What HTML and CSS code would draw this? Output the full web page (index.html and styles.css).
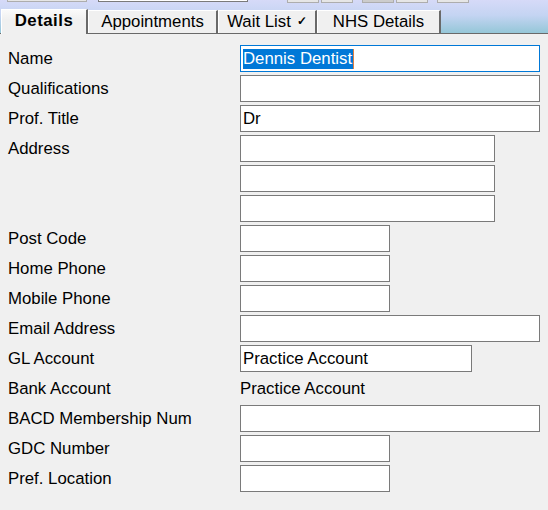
FILE: index.html
```html
<!DOCTYPE html>
<html lang="en">
<head>
    <meta charset="UTF-8">
    <title>Dentist Details</title>
    <link rel="stylesheet" href="styles.css">
</head>
<body>
    <div class="header">
        <div class="toolbar">
            <div class="tool-box"></div>
            <div class="tool-text"></div>
            <div class="tool-btn first"></div>
            <div class="tool-btn"></div>
            <div class="tool-btn group pressed"></div>
            <div class="tool-btn"></div>
            <div class="tool-btn group"></div>
        </div>
        <div class="tabs">
            <div class="tab active tab-details">Details</div>
            <div class="tab tab-appts">Appointments</div>
            <div class="tab tab-wait">Wait List <span class="tick">&#10003;</span></div>
            <div class="tab tab-nhs">NHS Details</div>
        </div>
    </div>

    <div class="panel">
        <div class="row">
            <label>Name</label>
            <div class="textbox wide focused"><span class="sel">Dennis Dentist</span></div>
        </div>
        <div class="row">
            <label>Qualifications</label>
            <div class="textbox wide"></div>
        </div>
        <div class="row">
            <label>Prof. Title</label>
            <div class="textbox wide">Dr</div>
        </div>
        <div class="row top">
            <label>Address</label>
            <div class="stack">
                <div class="textbox address"></div>
                <div class="textbox address"></div>
                <div class="textbox address"></div>
            </div>
        </div>
        <div class="row">
            <label>Post Code</label>
            <div class="textbox short"></div>
        </div>
        <div class="row">
            <label>Home Phone</label>
            <div class="textbox short"></div>
        </div>
        <div class="row">
            <label>Mobile Phone</label>
            <div class="textbox short"></div>
        </div>
        <div class="row">
            <label>Email Address</label>
            <div class="textbox wide"></div>
        </div>
        <div class="row">
            <label>GL Account</label>
            <div class="textbox account">Practice Account</div>
        </div>
        <div class="row">
            <label>Bank Account</label>
            <div class="value">Practice Account</div>
        </div>
        <div class="row">
            <label>BACD Membership Num</label>
            <div class="textbox wide"></div>
        </div>
        <div class="row">
            <label>GDC Number</label>
            <div class="textbox short"></div>
        </div>
        <div class="row">
            <label>Pref. Location</label>
            <div class="textbox short"></div>
        </div>
    </div>
</body>
</html>
```

FILE: styles.css
```css
body {
    margin: 0;
    background-color: #f0f0f0;
    font-family: 'Liberation Sans', Arial, sans-serif;
    font-size: 16.8px;
    color: #000;
}
.header {
    height: 34px;
    background: linear-gradient(to bottom, #d6daf8 0%, #c4d4f2 45%, #92c6d6 100%);
}
.toolbar {
    display: flex;
    align-items: flex-end;
    height: 4px;
    overflow: hidden;
}
.tool-box {
    width: 80px;
    height: 20px;
    margin-left: 7px;
    margin-bottom: 2px;
    box-sizing: border-box;
    background-color: #e6e6e6;
    border: 1px solid #adadad;
}
.tool-text {
    width: 150px;
    height: 20px;
    margin-left: 11px;
    margin-bottom: 2px;
    box-sizing: border-box;
    background-color: #fff;
    border: 1px solid #7a7a7a;
}
.tool-btn {
    width: 32px;
    height: 20px;
    margin-left: 2px;
    margin-bottom: 1px;
    box-sizing: border-box;
    background-color: #e6e6e6;
    border: 1px solid #adadad;
}
.tool-btn.first {
    margin-left: 39px;
}
.tool-btn.group {
    margin-left: 9px;
}
.tool-btn.pressed {
    background-color: #cccccc;
}
.tabs {
    display: flex;
    align-items: flex-end;
    height: 30px;
    padding-left: 1px;
    border-bottom: 1px solid #696969;
    box-sizing: border-box;
}
.tab {
    height: 23px;
    box-sizing: border-box;
    display: flex;
    align-items: center;
    justify-content: center;
    background-color: #f0f0f0;
    border-top: 1px solid #fff;
    border-left: 1px solid #fff;
    border-right: 2px solid #696969;
    padding-bottom: 1px;
}
.tab.active {
    height: 25px;
    margin-bottom: -1px;
    font-weight: bold;
    letter-spacing: 0.5px;
    background: linear-gradient(to bottom, #fafafa, #f0f0f0 40%);
    padding-bottom: 3px;
}
.tab-details {
    width: 87px;
}
.tab-appts {
    width: 130px;
}
.tab-wait {
    width: 99px;
}
.tab-nhs {
    width: 124px;
}
.tick {
    font-size: 12px;
    font-weight: bold;
    margin-left: 6px;
    margin-top: -2px;
}
.panel {
    display: flex;
    flex-direction: column;
    gap: 3px;
    padding: 11px 0 0 8px;
}
.row {
    display: flex;
    align-items: center;
    min-height: 27px;
}
.row.top {
    align-items: flex-start;
}
.row label {
    width: 232px;
    line-height: 27px;
}
.stack {
    display: flex;
    flex-direction: column;
    gap: 3px;
}
.textbox {
    height: 27px;
    box-sizing: border-box;
    display: flex;
    align-items: center;
    padding: 0 2px;
    background-color: #fff;
    border: 1px solid #7a7a7a;
    white-space: nowrap;
}
.textbox.focused {
    border-color: #0078d7;
}
.sel {
    background-color: #0078d7;
    color: #fff;
    line-height: 20px;
    padding-right: 1px;
    border-right: 1px solid #e08040;
}
.wide {
    width: 300px;
}
.address {
    width: 255px;
}
.short {
    width: 150px;
}
.account {
    width: 232px;
}
.value {
    line-height: 27px;
}
```
